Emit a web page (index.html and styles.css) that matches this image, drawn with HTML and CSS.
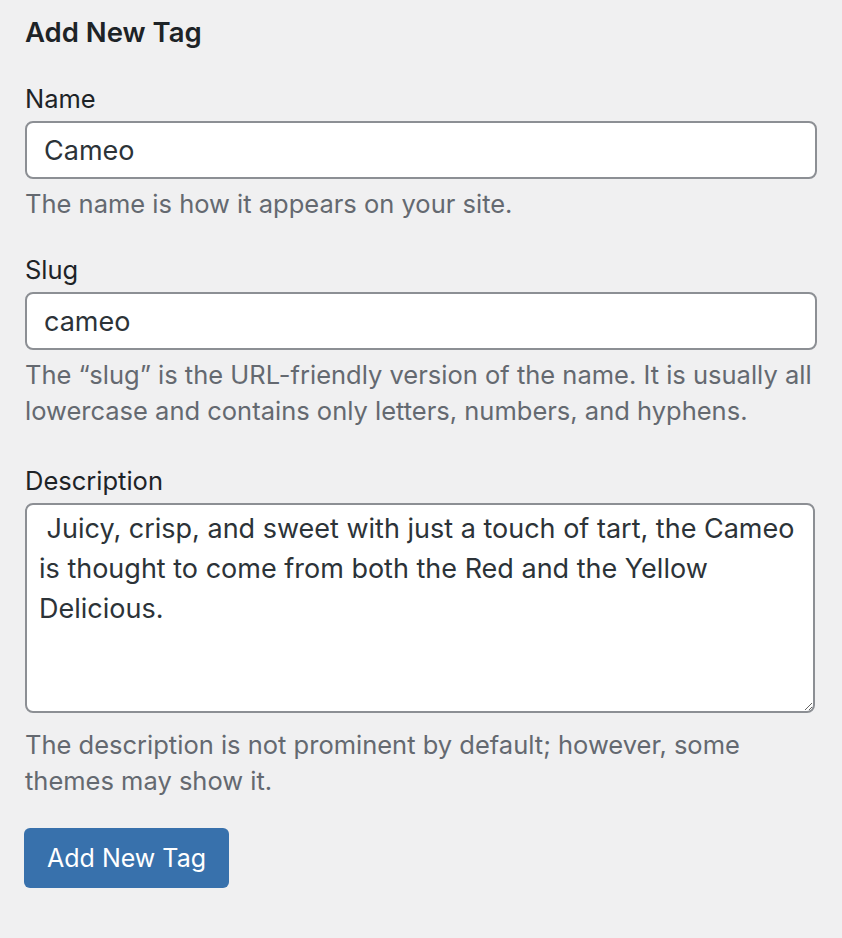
FILE: index.html
```html
<!DOCTYPE html>
<html lang="en">
<head>
<meta charset="utf-8">
<title>Add New Tag</title>
<link rel="stylesheet" href="styles.css">
</head>
<body>
<form class="tag-form">
  <h2 class="form-title">Add New Tag</h2>
  <div class="field field-name">
    <label class="field-label" for="tag-name">Name</label>
    <input class="text-input" id="tag-name" type="text" value="Cameo">
    <p class="help">The name is how it appears on your site.</p>
  </div>
  <div class="field field-slug">
    <label class="field-label" for="tag-slug">Slug</label>
    <input class="text-input" id="tag-slug" type="text" value="cameo">
    <p class="help">The “slug” is the URL-friendly version of the name. It is usually all lowercase and contains only letters, numbers, and hyphens.</p>
  </div>
  <div class="field field-desc">
    <label class="field-label" for="tag-desc">Description</label>
    <textarea class="text-area" id="tag-desc"> Juicy, crisp, and sweet with just a touch of tart, the Cameo is thought to come from both the Red and the Yellow Delicious.</textarea>
    <p class="help help-desc">The description is not prominent by default; however, some themes may show it.</p>
  </div>
  <button class="primary-btn" type="button">Add New Tag</button>
</form>
</body>
</html>
```

FILE: styles.css
```css
html, body {
  margin: 0;
  padding: 0;
  background: #f0f0f1;
}
body {
  font-family: Inter, "Noto Sans", "Liberation Sans", sans-serif;
  color: #1d2327;
}
.tag-form {
  width: 792px;
  padding: 15px 0 0 25px;
  display: flex;
  flex-direction: column;
  align-items: flex-start;
}
.form-title {
  margin: 0;
  font-size: 27.5px;
  line-height: 34px;
  font-weight: 600;
  color: #1d2327;
}
.field {
  width: 100%;
  display: flex;
  flex-direction: column;
}
.field-name {
  margin-top: 32px;
}
.field-slug {
  margin-top: 30px;
}
.field-desc {
  margin-top: 34px;
}
.field-label {
  font-size: 25.5px;
  line-height: 36px;
  margin-bottom: 4px;
}
.text-input {
  box-sizing: border-box;
  width: 792px;
  height: 58px;
  margin: 0;
  padding: 0 17px;
  border: 2px solid #8c8f94;
  border-radius: 8px;
  background: #fff;
  font-family: inherit;
  font-size: 27px;
  color: #2c3338;
  outline: none;
}
.text-area {
  box-sizing: border-box;
  width: 790px;
  height: 210px;
  margin: 0;
  padding: 4px 6px 8px 12px;
  border: 2px solid #8c8f94;
  border-radius: 8px;
  background: #fff;
  font-family: inherit;
  font-size: 27px;
  line-height: 40px;
  color: #2c3338;
  outline: none;
  resize: vertical;
}
.help {
  margin: 7px 0 0;
  font-size: 25.5px;
  line-height: 36px;
  color: #646970;
}
.help-desc {
  margin-top: 14px;
}
.primary-btn {
  margin: 29px 0 0 -1px;
  height: 60px;
  padding: 0 23px;
  border: 0;
  border-radius: 6px;
  background: #3871ac;
  color: #fff;
  font-family: inherit;
  font-size: 25px;
}
```
